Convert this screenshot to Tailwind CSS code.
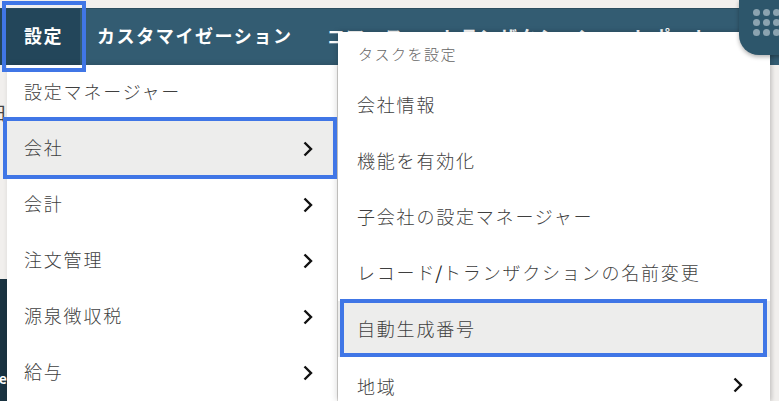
<!DOCTYPE html>
<html lang="ja">
<head>
<meta charset="utf-8">
<script src="https://cdn.jsdelivr.net/npm/@tailwindcss/browser@4"></script>
</head>
<body class="m-0 p-0">
<div class="relative w-[779px] h-[401px] overflow-hidden bg-[#f1efed] font-['Noto_Sans_CJK_JP','Roboto',sans-serif]">
  <!-- nav bar -->
  <div class="absolute left-0 top-[8px] w-full h-[57px] bg-[#335c72] border-t border-[#2a4c5f] flex items-stretch text-white font-bold text-[18px] tracking-[1.6px] whitespace-nowrap">
    <div class="w-[80px] pl-[24px] pb-[4px] flex items-center bg-[#23465a]">設定</div>
    <div class="pl-[17px] pb-[4px] flex items-center">カスタマイゼーション</div>
    <div class="pl-[34px] pb-[1px] flex items-center">コマース</div>
    <div class="pl-[36px] pb-[1px] flex items-center">トランザクション</div>
    <div class="pl-[36px] pb-[1px] flex items-center">レポート</div>
  </div>

  <!-- page fragments -->
  <div class="absolute left-0 top-[102px] text-[18px] leading-[20px] text-[#444] -ml-[11px]">日</div>
  <div class="absolute left-0 top-[279px] w-[7px] h-[122px] bg-[#1a3341] overflow-hidden">
    <span class="absolute right-0 top-[92px] text-white text-[14px] font-bold leading-[14px]">e</span>
  </div>

  <!-- first menu -->
  <div class="absolute left-[7px] top-[65px] w-[330px] h-[336px] bg-white shadow-[2px_0_6px_rgba(0,0,0,0.18)] text-[18px] font-light text-[#3f3f3f] tracking-[1.8px]">
    <div class="h-[56px] pl-[17px] flex items-center"><span class="pb-[4px]">設定マネージャー</span></div>
    <div class="h-[56px] pl-[17px] pr-[24px] flex items-center justify-between bg-[#ededec]">
      <span class="pb-[4px]">会社</span>
      <svg width="10" height="16" viewBox="0 0 10 16" fill="none" stroke="#111" stroke-width="2.4"><path d="M1.500 1.500 8 8l-6.500 6.500"/></svg>
    </div>
    <div class="h-[56px] pl-[17px] pr-[24px] flex items-center justify-between">
      <span class="pb-[4px]">会計</span>
      <svg width="10" height="16" viewBox="0 0 10 16" fill="none" stroke="#111" stroke-width="2.4"><path d="M1.500 1.500 8 8l-6.500 6.500"/></svg>
    </div>
    <div class="h-[56px] pl-[17px] pr-[24px] flex items-center justify-between">
      <span class="pb-[4px]">注文管理</span>
      <svg width="10" height="16" viewBox="0 0 10 16" fill="none" stroke="#111" stroke-width="2.4"><path d="M1.500 1.500 8 8l-6.500 6.500"/></svg>
    </div>
    <div class="h-[56px] pl-[17px] pr-[24px] flex items-center justify-between">
      <span class="pb-[4px]">源泉徴収税</span>
      <svg width="10" height="16" viewBox="0 0 10 16" fill="none" stroke="#111" stroke-width="2.4"><path d="M1.500 1.500 8 8l-6.500 6.500"/></svg>
    </div>
    <div class="h-[56px] pl-[17px] pr-[24px] flex items-center justify-between">
      <span class="pb-[4px]">給与</span>
      <svg width="10" height="16" viewBox="0 0 10 16" fill="none" stroke="#111" stroke-width="2.4"><path d="M1.500 1.500 8 8l-6.500 6.500"/></svg>
    </div>
  </div>

  <!-- second menu -->
  <div class="absolute left-[338px] top-[32px] w-[432px] h-[369px] bg-white shadow-[-2px_0_6px_rgba(0,0,0,0.12),2px_0_4px_rgba(0,0,0,0.15)] text-[18px] font-light text-[#3f3f3f] tracking-[1.8px]">
    <div class="h-[45px] pl-[20px] flex items-center text-[15px] tracking-[1.5px] text-[#666]">タスクを設定</div>
    <div class="h-[56px] pl-[19px] flex items-center"><span class="pb-[2px]">会社情報</span></div>
    <div class="h-[56px] pl-[19px] flex items-center"><span class="pb-[2px]">機能を有効化</span></div>
    <div class="h-[56px] pl-[19px] flex items-center"><span class="pb-[2px]">子会社の設定マネージャー</span></div>
    <div class="h-[56px] pl-[19px] flex items-center"><span class="pb-[2px]">レコード<span class="font-normal text-[#222] -mx-[1px]">/</span>トランザクションの名前変更</span></div>
    <div class="h-[56px] pl-[19px] flex items-center bg-[#ededec]"><span class="pb-[2px]">自動生成番号</span></div>
    <div class="h-[56px] pl-[19px] pr-[27px] flex items-center justify-between">
      <span class="pt-[2px]">地域</span>
      <svg width="10" height="16" viewBox="0 0 10 16" fill="none" stroke="#111" stroke-width="2.4"><path d="M1.500 1.500 8 8l-6.500 6.500"/></svg>
    </div>
  </div>

  <!-- app launcher -->
  <div class="absolute left-[739px] top-0 w-[50px] h-[55px] rounded-bl-[20px] bg-[#2d566b] shadow-[0_2px_4px_rgba(0,0,0,0.3)] grid grid-cols-[7px_7px_7px] grid-rows-[7px_7px_7px] gap-x-[3px] gap-y-[3px] pl-[14px] pt-[9px]">
    <span class="rounded-full bg-[#8ba3b0]"></span><span class="rounded-full bg-[#8ba3b0]"></span><span class="rounded-full bg-[#8ba3b0]"></span>
    <span class="rounded-full bg-[#8ba3b0]"></span><span class="rounded-full bg-[#8ba3b0]"></span><span class="rounded-full bg-[#8ba3b0]"></span>
    <span class="rounded-full bg-[#8ba3b0]"></span><span class="rounded-full bg-[#8ba3b0]"></span><span class="rounded-full bg-[#8ba3b0]"></span>
  </div>

  <!-- annotation outlines -->
  <div class="absolute left-[2px] top-[1px] w-[84px] h-[71px] border-[4px] border-[#4076e6]"></div>
  <div class="absolute left-[3px] top-[117px] w-[334px] h-[62px] border-[4px] border-[#4076e6]"></div>
  <div class="absolute left-[340px] top-[299px] w-[427px] h-[58px] border-[4px] border-[#4076e6]"></div>
</div>
</body>
</html>
